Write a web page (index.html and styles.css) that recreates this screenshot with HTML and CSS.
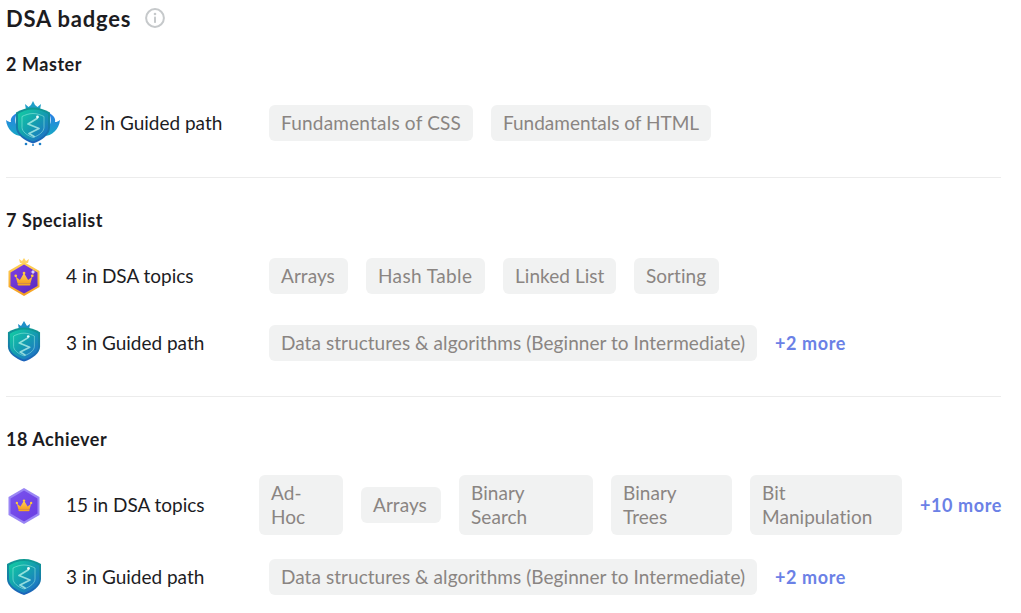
FILE: index.html
```html
<!DOCTYPE html>
<html lang="en">
<head>
<meta charset="utf-8">
<title>DSA badges</title>
<link rel="stylesheet" href="styles.css">
</head>
<body>
<svg class="defs" width="0" height="0" aria-hidden="true">
  <defs>
    <linearGradient id="teal" x1="0" y1="0" x2="1" y2="1"><stop offset="0" stop-color="#13cfa2"/><stop offset=".5" stop-color="#149db0"/><stop offset="1" stop-color="#2268cc"/></linearGradient>
    <linearGradient id="rim" x1="0" y1="0" x2="0" y2="1"><stop offset="0" stop-color="#0f9a92"/><stop offset="1" stop-color="#1c62bc"/></linearGradient>
    <linearGradient id="wing" x1="0" y1="0" x2="0" y2="1"><stop offset="0" stop-color="#2b7fe6"/><stop offset="1" stop-color="#17a8c4"/></linearGradient>
    <linearGradient id="purple" x1="0" y1="0" x2="1" y2="1"><stop offset="0" stop-color="#7c3fe4"/><stop offset="1" stop-color="#5a28c0"/></linearGradient>
    <linearGradient id="violet" x1="0" y1="0" x2="1" y2="1"><stop offset="0" stop-color="#7a54ee"/><stop offset="1" stop-color="#6a3ce2"/></linearGradient>
    <linearGradient id="gold" x1="0" y1="0" x2="0" y2="1"><stop offset="0" stop-color="#ffd25a"/><stop offset="1" stop-color="#f59f20"/></linearGradient>
    <symbol id="shield" viewBox="0 0 36 36">
      <path d="M18 0C24 0 30 2 35 5V20C35 27 27 33 18 36 9 33 1 27 1 20V5C6 2 12 0 18 0z" fill="url(#rim)"/>
      <path d="M18 2C24 2 29 4 33 6.500V20C33 26 26 31 18 34 10 31 3 26 3 20V6.500C7 4 12 2 18 2z" fill="url(#teal)"/>
      <path d="M18 6C22 6 26 7.500 29 9V20C29 24 24 28 18 30 12 28 7 24 7 20V9C10 7.500 14 6 18 6z" fill="none" stroke="#a8f3e8" stroke-opacity=".5" stroke-width="1"/>
      <path d="M22 11 13 16.500 24 21 14 26l5 3" fill="none" stroke="#c8fbf0" stroke-opacity=".7" stroke-width="1.800" stroke-linejoin="round" stroke-linecap="round"/>
      <circle cx="22.500" cy="9.500" r="1.400" fill="#eefffb"/>
    </symbol>
    <symbol id="crown" viewBox="0 0 24 16">
      <path d="M3 6l4.500 3.500L12 2l4.500 7.500L21 6l-2 7.500H5z" fill="url(#gold)"/>
      <circle cx="3" cy="5" r="1.500" fill="#ffc93c"/><circle cx="12" cy="2" r="1.500" fill="#ffc93c"/><circle cx="21" cy="5" r="1.500" fill="#ffc93c"/>
      <rect x="5" y="13.500" width="14" height="2" rx="1" fill="#f7a823"/>
    </symbol>
  </defs>
</svg>

<main class="page">
  <header class="title-row">
    <h1 class="title">DSA badges</h1>
    <svg class="info" viewBox="0 0 20 20" width="20" height="20"><circle cx="10" cy="10" r="8.900" fill="none" stroke="#c6c9cb" stroke-width="2"/><circle cx="10" cy="6" r="1.300" fill="#c6c9cb"/><rect x="9" y="8.500" width="2" height="6.500" rx=".8" fill="#c6c9cb"/></svg>
  </header>

  <section class="group group-master">
    <h2 class="group-title">2 Master</h2>
    <div class="row">
      <div class="lead">
        <svg class="icon" viewBox="0 0 54 46" width="54" height="46">
          <path d="M11 13C8 19 9 26 14 30l4 6C9 37 1 30 0 20c2 1.500 3 2 5 2-1-4 2-7 6-9z" fill="url(#wing)"/>
          <path d="M43 13C46 19 45 26 40 30l-4 6C45 37 53 30 54 20c-2 1.500-3 2-5 2 1-4-2-7-6-9z" fill="url(#wing)"/>
          <path d="M19 4l3.500 3L25 5l2-4 2 4 2.500 2L35 4l-1 6H20z" fill="#1f9ec8"/>
          <use href="#shield" x="9" y="7" width="36" height="37"/>
          <circle cx="20" cy="44" r="1.300" fill="#1c7fc8"/><circle cx="34" cy="44" r="1.300" fill="#1c7fc8"/><circle cx="27" cy="45" r="1" fill="#1c7fc8"/>
        </svg>
        <span class="label">2 in Guided path</span>
      </div>
      <div class="chips">
        <span class="chip chip-css">Fundamentals of CSS</span>
        <span class="chip chip-html">Fundamentals of HTML</span>
      </div>
    </div>
  </section>

  <section class="group group-specialist">
    <h2 class="group-title">7 Specialist</h2>
    <div class="row">
      <div class="lead">
        <svg class="icon" viewBox="0 0 36 40" width="36" height="40">
          <path d="M14 7l-1-4 3 2 2-3 2 3 3-2-1 4z" fill="#ffd468"/>
          <path d="M18 6 33.500 15v16L18 40 2.500 31V15z" fill="url(#gold)"/>
          <path d="M18 8.500 31.500 16.500v13.500L18 37.500 4.500 30V16.500z" fill="url(#purple)"/>
          <use href="#crown" x="7" y="15" width="22" height="15"/>
          <path d="M27 13.500l.8 1.700 1.700.8-1.700.8-.8 1.700-.8-1.700-1.700-.8 1.700-.8z" fill="#e8dcff"/>
        </svg>
        <span class="label">4 in DSA topics</span>
      </div>
      <div class="chips">
        <span class="chip chip-a">Arrays</span>
        <span class="chip chip-hash">Hash Table</span>
        <span class="chip chip-linked">Linked List</span>
        <span class="chip chip-sort">Sorting</span>
      </div>
    </div>
    <div class="row row-s2">
      <div class="lead">
        <svg class="icon" viewBox="0 0 36 44" width="36" height="44">
          <path d="M12 3l3 2 3-5 3 5 3-2-1 6H13z" fill="#1f8fc8"/>
          <use href="#shield" x="1" y="5" width="34" height="37"/>
        </svg>
        <span class="label">3 in Guided path</span>
      </div>
      <div class="chips">
        <span class="chip chip-data">Data structures &amp; algorithms (Beginner to Intermediate)</span>
        <a class="more" href="#">+2 more</a>
      </div>
    </div>
  </section>

  <section class="group group-achiever">
    <h2 class="group-title">18 Achiever</h2>
    <div class="row">
      <div class="lead lead-tight">
        <svg class="icon" viewBox="0 0 36 40" width="36" height="40">
          <path d="M18 3 33.500 12v18L18 39 2.500 30V12z" fill="#9a86f5"/>
          <path d="M18 5.500 31.500 13.500v15L18 36.500 4.500 28.500v-15z" fill="url(#violet)"/>
          <use href="#crown" x="8.500" y="14" width="19" height="12.700"/>
        </svg>
        <span class="label">15 in DSA topics</span>
      </div>
      <div class="chips">
        <span class="chip chip-adhoc">Ad-<br>Hoc</span>
        <span class="chip chip-a2">Arrays</span>
        <span class="chip chip-binary">Binary<br>Search</span>
        <span class="chip chip-trees">Binary<br>Trees</span>
        <span class="chip chip-bit">Bit<br>Manipulation</span>
        <a class="more" href="#">+10 more</a>
      </div>
    </div>
    <div class="row row-a2">
      <div class="lead">
        <svg class="icon" viewBox="0 0 36 44" width="36" height="44">
          <use href="#shield" x="0" y="4" width="36" height="36"/>
        </svg>
        <span class="label">3 in Guided path</span>
      </div>
      <div class="chips">
        <span class="chip chip-data">Data structures &amp; algorithms (Beginner to Intermediate)</span>
        <a class="more" href="#">+2 more</a>
      </div>
    </div>
  </section>
</main>
</body>
</html>
```

FILE: styles.css
```css
* { box-sizing: border-box; }
html, body { margin: 0; background: #fff; }
body { font-family: "Lato", "Noto Sans", sans-serif; color: #1c1c1f; overflow: hidden; }
.defs { position: absolute; }
.page { width: 995px; margin-left: 6px; height: 613px; }
.title-row { display: flex; align-items: center; gap: 14px; height: 38px; }
.title { margin: 0; font-size: 22px; line-height: 38px; font-weight: 700; letter-spacing: .8px; }
.info { display: block; margin-top: -3px; }
.group { border-bottom: 1px solid #ececec; }
.group-achiever { border-bottom: 0; }
.group-title { margin: 0 0 24px; font-size: 18px; line-height: 24px; font-weight: 700; letter-spacing: .55px; }
.group-master { padding-top: 14px; padding-bottom: 31px; }
.group-specialist { padding-top: 30px; padding-bottom: 31px; }
.group-achiever { padding-top: 30px; }
.row { display: flex; align-items: center; }
.row-s2 { margin-top: 25px; }
.row-a2 { margin-top: 20px; }
.lead { display: flex; align-items: center; gap: 24px; width: 263px; flex: none; }
.lead-tight { width: 253px; }
.icon { display: block; flex: none; }
.label { font-size: 19px; line-height: 24px; white-space: nowrap; }
.chips { display: flex; align-items: center; gap: 18px; }
.chip { display: block; padding: 6px 12px; background: #f1f2f2; border-radius: 6px; color: #8a8582; font-size: 19px; line-height: 24px; letter-spacing: .05px; white-space: nowrap; }
.chip-css { width: 204px; letter-spacing: .2px; }
.chip-html { width: 220px; letter-spacing: 0; }
.chip-a { width: 79px; }
.chip-hash { width: 119px; letter-spacing: .4px; }
.chip-linked { width: 113px; }
.chip-sort { width: 85px; }
.chip-data { width: 488px; }
.chip-adhoc { width: 84px; }
.chip-a2 { width: 80px; }
.chip-binary { width: 134px; }
.chip-trees { width: 121px; }
.chip-bit { width: 152px; }
.more { color: #6b81e6; font-size: 18px; line-height: 24px; font-weight: 700; letter-spacing: .6px; text-decoration: none; white-space: nowrap; }
```
